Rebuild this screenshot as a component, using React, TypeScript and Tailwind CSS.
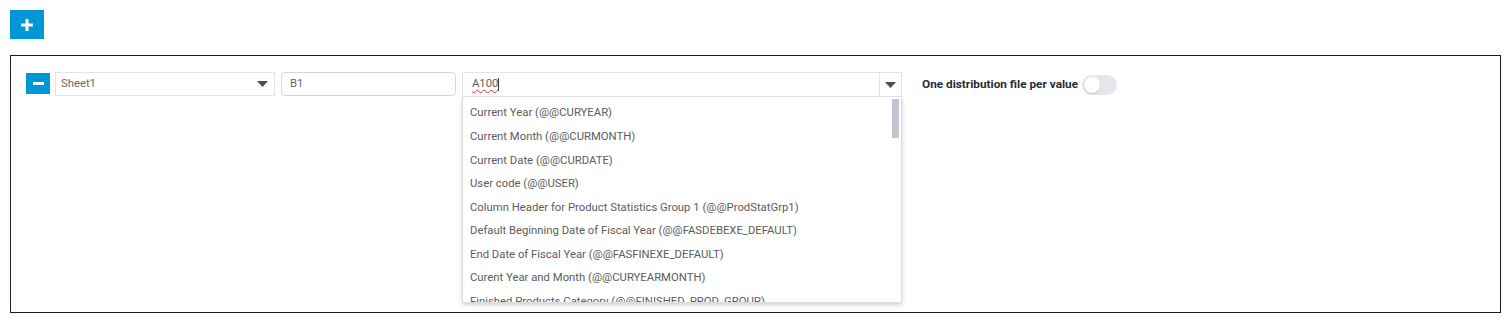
const options = [
  "Current Year (@@CURYEAR)",
  "Current Month (@@CURMONTH)",
  "Current Date (@@CURDATE)",
  "User code (@@USER)",
  "Column Header for Product Statistics Group 1 (@@ProdStatGrp1)",
  "Default Beginning Date of Fiscal Year (@@FASDEBEXE_DEFAULT)",
  "End Date of Fiscal Year (@@FASFINEXE_DEFAULT)",
  "Curent Year and Month (@@CURYEARMONTH)",
  "Finished Products Category (@@FINISHED_PROD_GROUP)",
];

function Caret() {
  return (
    <svg width="11" height="6" viewBox="0 0 11 6">
      <path d="M0 0 L11 0 L5.5 6 Z" fill="#4a4a5a" />
    </svg>
  );
}

export default function App() {
  return (
    <div className="w-[1507px] h-[327px] bg-white p-[10px] font-['Roboto',sans-serif] text-[11.3px] text-[#5c5c5c] overflow-hidden">

      {/* add button */}
      <button className="w-[34px] h-[29px] bg-[#0097d7] flex items-center justify-center">
        <svg width="12" height="12" viewBox="0 0 12 12">
          <rect x="4.5" y="0" width="3" height="12" fill="white" />
          <rect x="0" y="4.5" width="12" height="3" fill="white" />
        </svg>
      </button>

      {/* frame */}
      <div className="mt-[16px] w-[1491px] h-[258px] border-[1.5px] border-[#1c1c2c] pl-[15px] pt-[16px]">
        <div className="flex items-start">

          {/* remove button */}
          <button className="mt-[1px] w-[24px] h-[21px] bg-[#0097d7] flex items-center justify-center">
            <span className="block w-[11px] h-[3px] bg-white" />
          </button>

          {/* sheet select */}
          <div className="ml-[5px] w-[220px] h-[24px] border border-[#e4e4e8] flex items-center justify-between pl-[5px] pr-[6px] text-[#6a6a6a]">
            <span>Sheet1</span>
            <Caret />
          </div>

          {/* cell input */}
          <div className="ml-[6px] w-[175px] h-[24px] border border-[#d6d6dc] rounded-[4px] flex items-center pl-[8px] text-[#6a6a6a]">
            B1
          </div>

          {/* range combobox */}
          <div className="relative ml-[6px] w-[440px]">
            <div className="h-[25px] border border-[#e4e4e8] flex items-center">
              <div className="flex-1 pl-[9px] flex items-center">
                <span className="underline decoration-wavy decoration-[#e03030] decoration-1 underline-offset-2">A100</span>
                <span className="block w-px h-[13px] bg-[#333]" />
              </div>
              <div className="w-[22px] h-full border-l border-[#e4e4e8] flex items-center justify-center">
                <Caret />
              </div>
            </div>
            <div className="absolute left-0 top-[25px] w-[440px] h-[206px] bg-white border border-[#dcdce2] border-t-0 shadow-[0_2px_4px_rgba(0,0,0,0.18)] overflow-hidden flex">
              <div className="flex-1 pt-[5px]">
                {options.map((o) => (
                  <div key={o} className="h-[23.6px] flex items-center pl-[7px] whitespace-nowrap">
                    {o}
                  </div>
                ))}
              </div>
              <div className="w-[10px] pt-[2px] pr-[2px] flex justify-end">
                <div className="w-[7px] h-[39px] bg-[#c2c4d2]" />
              </div>
            </div>
          </div>

          {/* per value toggle */}
          <div className="ml-[20px] h-[26px] flex items-center gap-[4px]">
            <span className="font-bold text-[11.8px] text-[#2a2a38]">One distribution file per value</span>
            <div className="w-[35px] h-[20px] rounded-full bg-[#e6e6ea] p-[2px]">
              <div className="w-[16px] h-[16px] rounded-full bg-white shadow-[0_1px_2px_rgba(0,0,0,0.15)]" />
            </div>
          </div>

        </div>
      </div>
    </div>
  );
}
